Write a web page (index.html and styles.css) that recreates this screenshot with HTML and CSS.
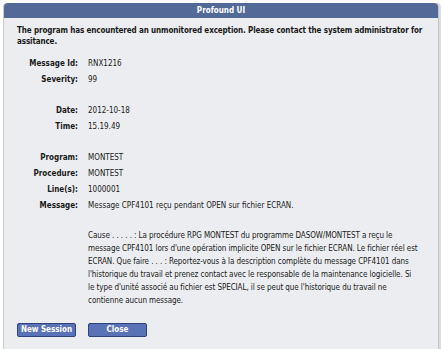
FILE: index.html
```html
<!DOCTYPE html>
<html>
<head>
<meta charset="utf-8">
<link rel="stylesheet" href="styles.css">
</head>
<body>
<div class="panel">
  <div class="title">Profound UI</div>
  <div class="content">
    <p class="intro">The program has encountered an unmonitored exception. Please contact the system administrator for assitance.</p>
    <div class="fields">
      <div class="row"><span class="lbl">Message Id:</span><span class="val">RNX1216</span></div>
      <div class="row"><span class="lbl">Severity:</span><span class="val">99</span></div>
      <div class="row blank"></div>
      <div class="row"><span class="lbl">Date:</span><span class="val">2012-10-18</span></div>
      <div class="row"><span class="lbl">Time:</span><span class="val">15.19.49</span></div>
      <div class="row blank"></div>
      <div class="row"><span class="lbl">Program:</span><span class="val">MONTEST</span></div>
      <div class="row"><span class="lbl">Procedure:</span><span class="val">MONTEST</span></div>
      <div class="row"><span class="lbl">Line(s):</span><span class="val">1000001</span></div>
      <div class="row"><span class="lbl">Message:</span><span class="val">Message CPF4101 reçu pendant OPEN sur fichier ECRAN.</span></div>
    </div>
    <p class="cause">Cause . . . . . : La procédure RPG MONTEST du programme DASOW/MONTEST a reçu le message CPF4101 lors d'une opération implicite OPEN sur le fichier ECRAN. Le fichier réel est ECRAN. Que faire . . . : Reportez-vous à la description complète du message CPF4101 dans l'historique du travail et prenez contact avec le responsable de la maintenance logicielle. Si le type d'unité associé au fichier est SPECIAL, il se peut que l'historique du travail ne contienne aucun message.</p>
    <div class="buttons">
      <button class="btn">New Session</button>
      <button class="btn">Close</button>
    </div>
  </div>
</div>
</body>
</html>
```
FILE: styles.css
```css
html, body {
  margin: 0;
  padding: 0;
  background: #ffffff;
}
body {
  padding: 3px 3px 0 3px;
  font-family: "DejaVu Sans Condensed", "DejaVu Sans", sans-serif;
  font-size: 8px;
  color: #1a1a1a;
}
.panel {
  width: 436px;
  height: 346px;
  background: #ecedf0;
  border-left: 1px solid #c9cacd;
  border-right: 1px solid #c4c5c8;
  box-shadow: 2px 0 0 #dcdde0;
  border-radius: 4px 4px 0 0;
  box-sizing: border-box;
}
.title {
  height: 15px;
  line-height: 15px;
  background: #536a99;
  color: #ffffff;
  font-weight: bold;
  text-align: center;
  border-radius: 4px 4px 0 0;
}
.content {
  padding: 7px 10px 0 13px;
}
.intro {
  margin: 0;
  font-weight: bold;
  letter-spacing: -0.12px;
  line-height: 11px;
}
.fields {
  margin-top: 11px;
  display: flex;
  flex-direction: column;
  gap: 5px;
}
.row {
  display: flex;
  align-items: flex-start;
  height: 11px;
  line-height: 11px;
}
.row.blank {
  height: 10px;
}
.lbl {
  width: 61px;
  text-align: right;
  font-weight: bold;
  flex: none;
}
.val {
  margin-left: 10px;
}
.cause {
  margin: 18px 9px 0 71px;
  letter-spacing: -0.08px;
  line-height: 13px;
}
.buttons {
  margin-top: 16px;
  display: flex;
  gap: 12px;
}
.btn {
  width: 59px;
  height: 14px;
  padding: 0;
  background: #5a72b6;
  border: 1px solid #2f4279;
  border-radius: 2px;
  color: #ffffff;
  font-family: inherit;
  font-size: 8px;
  font-weight: bold;
  line-height: 12px;
}
```
